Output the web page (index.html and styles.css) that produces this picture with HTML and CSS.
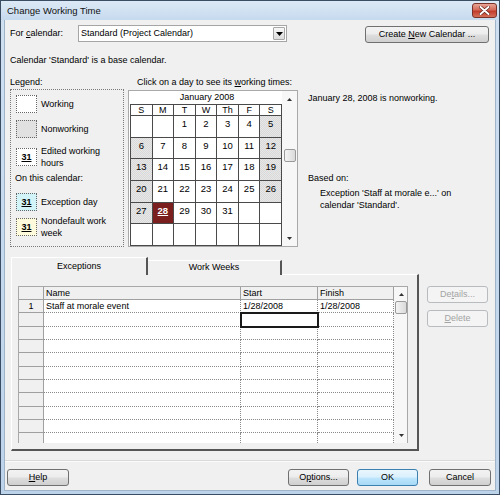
FILE: index.html
```html
<!DOCTYPE html>
<html>
<head>
<meta charset="utf-8">
<title>Change Working Time</title>
<link rel="stylesheet" href="styles.css">
</head>
<body>
<div class="window">
  <div class="titlebar">
    <span class="title">Change Working Time</span>
    <span class="close"><svg width="11" height="9" viewBox="0 0 11 9"><path d="M1.5 1 L9.5 8 M9.5 1 L1.5 8" stroke="#5a1a12" stroke-width="3.2" stroke-linecap="round"/><path d="M1.5 1 L9.5 8 M9.5 1 L1.5 8" stroke="#fff" stroke-width="2" stroke-linecap="round"/></svg></span>
  </div>
  <div class="client">
    <div class="row-top">
      <span class="lbl">For <u>c</u>alendar:</span>
      <div class="combo">
        <span class="combo-text">Standard (Project Calendar)</span>
        <span class="dd"><svg width="7" height="4" viewBox="0 0 7 4"><path d="M0 0 H7 L3.5 4 Z" fill="#000"/></svg></span>
      </div>
      <div class="btn btn-create"><span>Create <u>N</u>ew Calendar ...</span></div>
    </div>
    <div class="base-note">Calendar 'Standard' is a base calendar.</div>

    <div class="main">
      <div class="legend-col">
        <div class="sec-label">Legend:</div>
        <div class="legend-box">
          <div class="lg-item i1"><span class="sw sw-work"></span><span>Working</span></div>
          <div class="lg-item i2"><span class="sw sw-non"></span><span>Nonworking</span></div>
          <div class="lg-item i3"><span class="sw sw-edit"><b>31</b></span><span class="two">Edited working<br>hours</span></div>
          <div class="lg-on">On this calendar:</div>
          <div class="lg-item i4"><span class="sw sw-exc"><b>31</b></span><span>Exception day</span></div>
          <div class="lg-item i5"><span class="sw sw-nd"><b>31</b></span><span class="two">Nondefault work<br>week</span></div>
        </div>
      </div>

      <div class="cal-col">
        <div class="sec-label cal-label">Click on a day to see its <u>w</u>orking times:</div>
        <div class="cal-box">
          <div class="cal-main">
            <div class="cal-month">January 2008</div>
            <div class="cal-grid">
              <div class="dh">S</div><div class="dh">M</div><div class="dh">T</div><div class="dh">W</div><div class="dh">Th</div><div class="dh">F</div><div class="dh">S</div>
              <div class="dc"></div><div class="dc"></div><div class="dc">1</div><div class="dc">2</div><div class="dc">3</div><div class="dc">4</div><div class="dc we">5</div>
              <div class="dc we">6</div><div class="dc">7</div><div class="dc">8</div><div class="dc">9</div><div class="dc">10</div><div class="dc">11</div><div class="dc we">12</div>
              <div class="dc we">13</div><div class="dc">14</div><div class="dc">15</div><div class="dc">16</div><div class="dc">17</div><div class="dc">18</div><div class="dc we">19</div>
              <div class="dc we">20</div><div class="dc">21</div><div class="dc">22</div><div class="dc">23</div><div class="dc">24</div><div class="dc">25</div><div class="dc we">26</div>
              <div class="dc we">27</div><div class="dc sel">28</div><div class="dc">29</div><div class="dc">30</div><div class="dc">31</div><div class="dc"></div><div class="dc"></div>
              <div class="dc"></div><div class="dc"></div><div class="dc"></div><div class="dc"></div><div class="dc"></div><div class="dc"></div><div class="dc"></div>
            </div>
          </div>
          <div class="cal-scroll">
            <span class="arr"><svg width="5" height="3" viewBox="0 0 5 3"><path d="M0 3 H5 L2.5 0 Z" fill="#333"/></svg></span>
            <span class="thumb"></span>
            <span class="arr"><svg width="5" height="3" viewBox="0 0 5 3"><path d="M0 0 H5 L2.5 3 Z" fill="#333"/></svg></span>
          </div>
        </div>
      </div>

      <div class="info-col">
        <div class="info-1">January 28, 2008 is nonworking.</div>
        <div class="info-2">Based on:</div>
        <div class="info-3">Exception 'Staff at morale e...' on<br>calendar 'Standard'.</div>
      </div>
    </div>

    <div class="lower">
      <div class="tabcol">
        <div class="tabs">
          <div class="tab tab-on">Exceptions</div>
          <div class="tab tab-off">Work Weeks</div>
        </div>
        <div class="panel">
          <div class="tbl">
            <div class="tgrid">
              <div class="hc"></div><div class="hc">Name</div><div class="hc">Start</div><div class="hc">Finish</div>
              <div class="rn">1</div><div class="tc">Staff at morale event</div><div class="tc">1/28/2008</div><div class="tc">1/28/2008</div>
              <div class="rn"></div><div class="tc"></div><div class="tc cur"></div><div class="tc"></div>
              <div class="rn"></div><div class="tc"></div><div class="tc"></div><div class="tc"></div>
              <div class="rn"></div><div class="tc"></div><div class="tc"></div><div class="tc"></div>
              <div class="rn"></div><div class="tc"></div><div class="tc"></div><div class="tc"></div>
              <div class="rn"></div><div class="tc"></div><div class="tc"></div><div class="tc"></div>
              <div class="rn"></div><div class="tc"></div><div class="tc"></div><div class="tc"></div>
              <div class="rn"></div><div class="tc"></div><div class="tc"></div><div class="tc"></div>
              <div class="rn"></div><div class="tc"></div><div class="tc"></div><div class="tc"></div>
              <div class="rn"></div><div class="tc"></div><div class="tc"></div><div class="tc"></div>
              <div class="rn"></div><div class="tc"></div><div class="tc"></div><div class="tc"></div>
            </div>
            <div class="tscroll">
              <span class="arr"><svg width="5" height="3" viewBox="0 0 5 3"><path d="M0 3 H5 L2.5 0 Z" fill="#333"/></svg></span>
              <span class="tthumb"></span>
              <span class="arr arr-down"><svg width="5" height="3" viewBox="0 0 5 3"><path d="M0 0 H5 L2.5 3 Z" fill="#333"/></svg></span>
            </div>
          </div>
        </div>
      </div>
      <div class="side-btns">
        <div class="btn btn-dis"><span>De<u>t</u>ails...</span></div>
        <div class="btn btn-dis"><span><u>D</u>elete</span></div>
      </div>
    </div>

    <div class="sep"></div>
    <div class="footer">
      <div class="btn btn-help"><span><u>H</u>elp</span></div>
      <div class="btn btn-opt"><span>O<u>p</u>tions...</span></div>
      <div class="btn btn-ok"><span>OK</span></div>
      <div class="btn btn-cancel"><span>Cancel</span></div>
    </div>
  </div>
</div>
</body>
</html>
```
FILE: styles.css
```css
* { box-sizing: border-box; }
html, body { margin: 0; padding: 0; }
body {
  width: 500px; height: 495px; overflow: hidden;
  font-family: "Liberation Sans", Arial, sans-serif;
  font-size: 9px; color: #000; background: #fff;
}
.window {
  width: 500px; height: 495px;
  border: 1px solid #3b4d63;
  background: linear-gradient(#cfe0f2, #bcd3ea);
  padding: 0 3px 3px 3px;
  display: flex; flex-direction: column;
}
.titlebar {
  height: 19px; margin: 0 -3px; padding: 0 2px 0 6px;
  display: flex; align-items: center; justify-content: space-between;
  background: linear-gradient(#dce9f6, #c6daee);
}
.title { font-size: 9.5px; color: #111; }
.close {
  width: 25px; height: 15px;
  border: 1px solid #7a3128; border-radius: 3px;
  background: linear-gradient(#e9a597, #d46a5a 45%, #c23c2a 55%, #d4705a);
  display: flex; align-items: center; justify-content: center;
}
.client {
  flex: 1; background: #f0f0f0;
  display: flex; flex-direction: column;
  border: 1px solid #9fb4c9; border-top: none;
}

/* top row */
.row-top {
  display: flex; align-items: flex-start;
  margin-top: 5px; padding-left: 5px; padding-right: 6px; height: 18px;
}
.lbl { width: 68px; line-height: 17px; }
.combo {
  width: 209px; height: 17px;
  border: 1px solid #a5a5a5; background: #fff;
  display: flex; align-items: center; padding-left: 2px;
}
.combo-text { flex: 1; line-height: 15px; }
.dd {
  width: 12px; height: 13px; margin-right: 1px;
  border: 1px solid #a7a7a7; border-radius: 1px;
  background: linear-gradient(#f8f8f8, #dcdcdc);
  display: flex; align-items: center; justify-content: center;
}
.btn {
  height: 17px; border: 1px solid #707070; border-radius: 3px;
  background: linear-gradient(#f3f3f3 0, #ececec 48%, #dedede 52%, #cfcfcf 100%);
  display: flex; align-items: center; justify-content: center;
  line-height: 15px; color: #000; white-space: nowrap;
}
.btn-create { margin-left: auto; width: 124px; margin-top: 1px; }

.base-note { margin-top: 11px; padding-left: 5px; line-height: 12px; }

/* main */
.main { display: flex; margin-top: 10px; padding-left: 5px; }
.sec-label { line-height: 13px; }
.legend-box {
  width: 114px; height: 158px;
  border: 1px dotted #7a7a7a;
  padding: 5px 0 0 5px;
}
.lg-item { display: flex; align-items: center; gap: 4px; height: 18px; }
.i2 { margin-top: 7px; }
.i3 { margin-top: 10px; }
.i4 { margin-top: 9px; }
.i5 { margin-top: 7px; }
.two { line-height: 12px; }
.lg-on { margin-top: 6px; margin-left: -1px; line-height: 12px; }
.sw {
  width: 21px; height: 18px; flex: none;
  border: 1px dotted #666;
  display: flex; align-items: center; justify-content: center;
  font-size: 9px;
}
.sw b { text-decoration: underline; }
.sw-work { background: #fff; }
.sw-non { background: #e1e1e1; }
.sw-edit { background: #fff; }
.sw-exc { background: #d2f4f8; }
.sw-nd { background: #fdfbdc; }

.cal-col { margin-left: 4px; width: 170px; }
.cal-label { padding-left: 9px; }
.cal-box {
  margin-top: 1px; width: 170px; height: 157px;
  border: 1px solid #a9a9a9; background: #fff;
  display: flex; overflow: hidden;
}
.cal-main { width: 153px; padding-left: 1px; }
.cal-month { height: 14px; line-height: 13px; text-align: center; border-bottom: 1px solid #4a4a4a; padding-left: 2px; }
.cal-grid {
  display: grid; grid-template-columns: repeat(7, 1fr);
  grid-template-rows: 11px repeat(6, 21.67px);
  border-left: 1px solid #4a4a4a;
}
.dh {
  border-right: 1px solid #4a4a4a; border-bottom: 1px solid #4a4a4a;
  text-align: center; line-height: 10px;
}
.dc {
  border-right: 1px solid #4a4a4a; border-bottom: 1px solid #4a4a4a;
  text-align: center; padding-top: 2px; line-height: 12px; font-size: 9.5px;
  background: #fff;
}
.we {
  background: repeating-conic-gradient(#d9d9d9 0 25%, #e7e7e7 0 50%) 0 0 / 2px 2px;
}
.sel {
  background: #7a1e1e; color: #fff; font-weight: bold; text-decoration: underline;
}
.cal-scroll {
  width: 15px; flex: none; background: #f7f7f7;
  display: flex; flex-direction: column; align-items: center;
  padding-top: 6px;
}
.arr { display: flex; height: 5px; align-items: center; }
.thumb {
  margin-top: 47px; width: 12px; height: 13px;
  border: 1px solid #9a9a9a; border-radius: 2px;
  background: linear-gradient(90deg, #f4f4f4, #dadada);
}
.cal-scroll .arr:last-child { margin-top: 74px; }

.info-col { margin-left: 10px; }
.info-1 { margin-top: 16px; line-height: 12px; }
.info-2 { margin-top: 68px; line-height: 12px; }
.info-3 { margin-top: 3px; padding-left: 12px; line-height: 12px; }

/* lower */
.lower { display: flex; margin-top: 10px; }
.tabcol { margin-left: 6px; width: 408px; }
.tabs { display: flex; align-items: flex-end; height: 18px; margin-bottom: -1px; position: relative; z-index: 1; }
.tab {
  text-align: center; background: #f0f0f0;
  border-top: 1px solid #fff; border-right: 2px solid #555;
}
.tab-on { width: 137px; height: 18px; border-left: 1px solid #fff; line-height: 16px; }
.tab-off { width: 134px; height: 15px; line-height: 13px; }
.panel {
  height: 177px;
  border-top: 1px solid #fff; border-left: 1px solid #fff;
  border-right: 2px solid #555; border-bottom: 2px solid #555;
  padding: 11px 0 0 6px;
}
.tbl {
  width: 390px; height: 157px; display: flex;
  border: 1px solid #a8a8a8; border-bottom: none; background: #fff;
  overflow: hidden;
}
.tgrid {
  display: grid; width: 375px;
  grid-template-columns: 25px 197px 77px 76px;
  grid-template-rows: 13px;
  grid-auto-rows: 13.33px;
}
.hc {
  background: #f0f0f0; border-right: 1px solid #a0a0a0; border-bottom: 1px solid #a0a0a0;
  line-height: 12px; padding-left: 2px;
}
.rn {
  background: #f0f0f0; border-right: 1px solid #a0a0a0; border-bottom: 1px solid #a0a0a0;
  text-align: center; line-height: 12px;
}
.tc {
  border-right: 1px dotted #8a8a8a; border-bottom: 1px dotted #8a8a8a;
  line-height: 12px; padding-left: 2px; white-space: nowrap;
}
.cur { outline: 2px solid #1a1a1a; outline-offset: -1px; position: relative; }
.tscroll {
  width: 14px; flex: none; background: #f7f7f7;
  display: flex; flex-direction: column; align-items: center; padding-top: 5px;
}
.tthumb {
  margin-top: 4px; width: 12px; height: 13px;
  border: 1px solid #9a9a9a; border-radius: 2px;
  background: linear-gradient(90deg, #f4f4f4, #dadada);
}
.arr-down { margin-top: 119px; }

.side-btns { margin-left: 8px; margin-top: 29px; display: flex; flex-direction: column; gap: 7px; }
.btn-dis {
  width: 61px; color: #a3a3a3; border-color: #b8bcbf;
  background: #f4f4f4;
}

.sep { margin-top: 9px; border-top: 1px solid #d9d9d9; border-bottom: 1px solid #fbfbfb; }
.footer { display: flex; margin-top: 7px; padding: 0 4px 0 2px; }
.btn-help { width: 62px; }
.btn-opt { width: 61px; margin-left: auto; }
.btn-ok {
  width: 61px; margin-left: 8px; border-color: #3c7fb1;
  background: linear-gradient(#eaf6fd 0, #d9f0fc 48%, #bee6fd 52%, #a7d9f5 100%);
}
.btn-cancel { width: 62px; margin-left: 11px; }
```
